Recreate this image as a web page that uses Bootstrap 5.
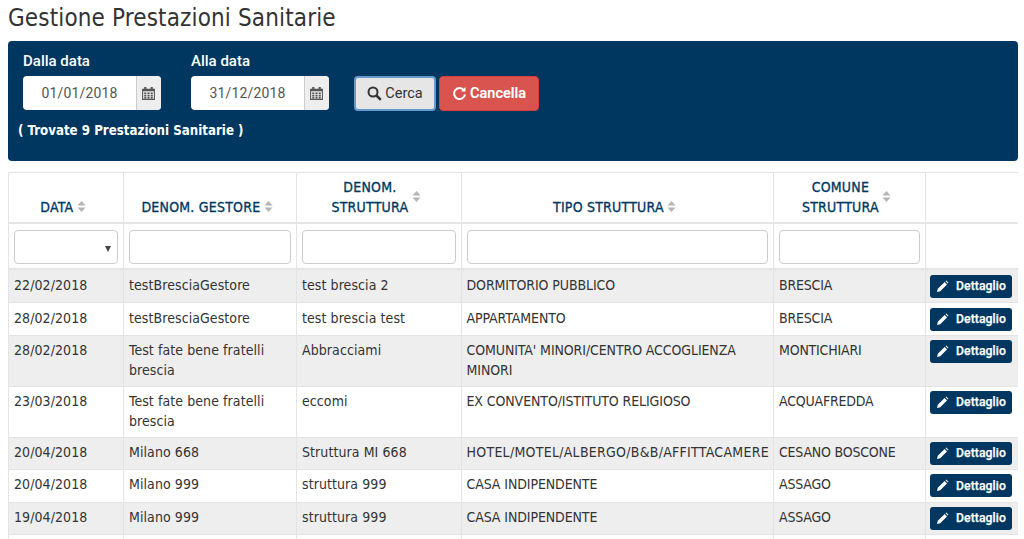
<!DOCTYPE html>
<html lang="it"><head><meta charset="utf-8"><title>Gestione Prestazioni Sanitarie</title>
<link href="https://cdn.jsdelivr.net/npm/bootstrap@5.3.0/dist/css/bootstrap.min.css" rel="stylesheet">
<style>
html,body{height:539px;overflow:hidden}
body{font-family:"DejaVu Sans Condensed","DejaVu Sans",sans-serif;font-stretch:condensed;font-size:14px;color:#333;background:#fff;padding:0 6px 0 8px}
.page-title{font-size:24px;font-weight:400;line-height:28px;margin:4px 0 9px;color:#333;font-family:inherit;letter-spacing:.14px}
.search-panel{background:#003760;border-radius:4px;height:120px;padding:12px 15px 0 15px;color:#fff}
.search-panel label{display:block;font-family:Roboto,sans-serif;font-stretch:normal;font-weight:500;font-size:15px;line-height:17px;margin-bottom:6px}
.field{width:138px;margin-right:30px}
.date-input{display:flex;height:34px;border-radius:4px;overflow:hidden;background:#fff;width:100%}
.date-input span:first-child{flex:1;text-align:center;font:400 14px/35px Roboto,sans-serif;letter-spacing:.15px;color:#555}
.date-addon{width:25px;background:#eee;border-left:1px solid #ccc;display:flex;align-items:center;justify-content:center;padding-right:2px}
.btn-cerca,.btn-cancella{height:35px;font:400 14.5px/1 Roboto,sans-serif;display:inline-flex;align-items:center;justify-content:center;border-radius:4px;padding:2px 0 0;gap:3px;position:relative;top:1px}
.btn-cerca svg,.btn-cancella svg{margin-top:-3px}
.btn-cerca{width:82px;background:#e6e6e6;border:2px solid #6699cc;color:#333;margin-left:-5px}
.btn-cancella{width:100px;background:#d9534f;border:1px solid #d43f3a;color:#fff;margin-left:3px;font-weight:500;-webkit-text-stroke:.2px #fff}
.found{font-weight:700;font-size:13.200px;line-height:16px;margin:13px 0 0 -5px}
.grid-wrap{margin-top:11px;width:1010px;height:367px;overflow:hidden}
.data-grid{table-layout:fixed;width:1010px;margin:0;border-color:#e4e4e4;--bs-table-striped-bg:#eee;--bs-table-striped-color:#333;--bs-table-color:#333;color:#333;font-size:14px}
.data-grid>:not(caption)>*>*{padding:5px;line-height:20px;vertical-align:top;border-color:#e4e4e4}
.data-grid thead th{color:#003760;font-size:14px;text-align:center;vertical-align:bottom;padding:4px 11px 5px 5px;border-bottom-width:2px;line-height:20px;font-weight:400;-webkit-text-stroke:.3px #003760;letter-spacing:.22px}
.data-grid thead tr.filter-row td{padding:6px 5px 4px;height:46px;border-bottom-width:2px}
.sorter{display:inline-block;vertical-align:middle;position:relative;top:-1px;margin-left:-1px}
.sort-wrap{display:inline-flex;align-items:center;justify-content:center}
.filter-box{height:34px;width:100%;border:1px solid #ccc;border-radius:4px;background:#fff;position:relative;display:block}
.filter-select::after{content:"";position:absolute;right:6px;top:15px;border-left:3px solid transparent;border-right:3px solid transparent;border-top:6px solid #444}
.btn-dett{display:inline-flex;align-items:center;background:#003760;color:#fff;border-radius:3px;height:23px;width:82px;font:500 12.200px/1 Roboto,sans-serif;padding:0 0 0 6px;gap:7px;border:0;-webkit-text-stroke:.25px #fff;text-decoration:none}
.col-a{width:115px}.col-b{width:173px}.col-c{width:165px}.col-d{width:312px}.col-e{width:152px}.col-f{width:93px}
.data-grid tbody td{padding-top:5px;padding-bottom:5px;letter-spacing:.08px}
.data-grid tbody tr.two td,.data-grid tbody tr.one td{padding-top:4.400px;padding-bottom:4.600px}
.data-grid tbody td.tipo{letter-spacing:-.1px;padding-left:4.500px}
.data-grid tbody td.tipo-wide{letter-spacing:.27px;padding-left:4.500px}
.data-grid tbody td.comune{letter-spacing:-.2px}
.data-grid tbody tr td.act{padding-left:4px;padding-right:0;padding-bottom:0}
.data-grid tbody tr.one td{height:32.500px}
.data-grid tbody tr.tall td{height:33px}
.data-grid tbody tr.two td{height:51px}
</style></head>
<body>
<h1 class="page-title">Gestione Prestazioni Sanitarie</h1>
<div class="search-panel">
  <div class="d-flex align-items-end">
    <div class="field"><label>Dalla data</label><div class="date-input"><span>01/01/2018</span><span class="date-addon"><svg width="15" height="15" viewBox="0 0 14 14"><path fill="#555" d="M1 2.500h2V1h2v1.500h4V1h2v1.500h2V13H1z"/><path fill="#eee" d="M2 5h10v7H2z"/><path fill="#555" d="M3 6h2v1.500H3zM6 6h2v1.500H6zM9 6h2v1.500H9zM3 8.200h2v1.500H3zM6 8.200h2v1.500H6zM9 8.200h2v1.500H9zM3 10.300h2v1.300H3zM6 10.300h2v1.300H6zM9 10.300h2v1.300H9z"/></svg></span></div></div>
    <div class="field"><label>Alla data</label><div class="date-input"><span>31/12/2018</span><span class="date-addon"><svg width="15" height="15" viewBox="0 0 14 14"><path fill="#555" d="M1 2.500h2V1h2v1.500h4V1h2v1.500h2V13H1z"/><path fill="#eee" d="M2 5h10v7H2z"/><path fill="#555" d="M3 6h2v1.500H3zM6 6h2v1.500H6zM9 6h2v1.500H9zM3 8.200h2v1.500H3zM6 8.200h2v1.500H6zM9 8.200h2v1.500H9zM3 10.300h2v1.300H3zM6 10.300h2v1.300H6zM9 10.300h2v1.300H9z"/></svg></span></div></div>
    <button class="btn btn-cerca"><svg width="15" height="15" viewBox="0 0 15 15" fill="none" stroke="#333" stroke-width="2"><circle cx="6" cy="6" r="4.500"/><path stroke-width="2.500" d="M9.500 9.500l4.300 4.300"/></svg>Cerca</button>
    <button class="btn btn-cancella"><svg width="15" height="15" viewBox="0 0 15 15" fill="none" stroke="#fff" stroke-width="2"><path d="M12 4.300A5.500 5.500 0 1 0 13 8.500"/><path fill="#fff" stroke="none" d="M9 5.500L13.500 1v4.500z"/></svg>Cancella</button>
  </div>
  <p class="found">( Trovate 9 Prestazioni Sanitarie )</p>
</div>
<div class="grid-wrap">
<table class="table table-bordered table-striped data-grid">
<colgroup><col class="col-a"><col class="col-b"><col class="col-c"><col class="col-d"><col class="col-e"><col class="col-f"></colgroup>
<thead>
<tr>
<th><span class="sort-wrap">DATA&nbsp;<svg class="sorter" width="9" height="13" viewBox="0 0 9 13" fill="#b5b5b5"><path d="M4.500 1L8.500 5.500H.5zM4.500 12L.5 7.500h8z"/></svg></span></th>
<th><span class="sort-wrap">DENOM. GESTORE&nbsp;<svg class="sorter" width="9" height="13" viewBox="0 0 9 13" fill="#b5b5b5"><path d="M4.500 1L8.500 5.500H.5zM4.500 12L.5 7.500h8z"/></svg></span></th>
<th><span class="sort-wrap"><span>DENOM.<br>STRUTTURA</span>&nbsp;<svg class="sorter" width="9" height="13" viewBox="0 0 9 13" fill="#b5b5b5"><path d="M4.500 1L8.500 5.500H.5zM4.500 12L.5 7.500h8z"/></svg></span></th>
<th><span class="sort-wrap">TIPO STRUTTURA&nbsp;<svg class="sorter" width="9" height="13" viewBox="0 0 9 13" fill="#b5b5b5"><path d="M4.500 1L8.500 5.500H.5zM4.500 12L.5 7.500h8z"/></svg></span></th>
<th><span class="sort-wrap"><span>COMUNE<br>STRUTTURA</span>&nbsp;<svg class="sorter" width="9" height="13" viewBox="0 0 9 13" fill="#b5b5b5"><path d="M4.500 1L8.500 5.500H.5zM4.500 12L.5 7.500h8z"/></svg></span></th>
<th></th>
</tr>
<tr class="filter-row"><td><span class="filter-box filter-select"></span></td><td><span class="filter-box"></span></td><td><span class="filter-box"></span></td><td><span class="filter-box"></span></td><td><span class="filter-box"></span></td><td></td></tr>
</thead>
<tbody>
<tr class="tall"><td>22/02/2018</td><td>testBresciaGestore</td><td>test brescia 2</td><td class="tipo">DORMITORIO PUBBLICO</td><td class="comune">BRESCIA</td><td class="act"><a class="btn-dett"><svg width="13" height="13" viewBox="0 0 13 13" fill="#fff"><path d="M1 12l.8-3.200L8.600 2l2.400 2.400L4.200 11.200zM9.500 1.200l.8-.6 2.100 2.100-.6.800z"/></svg>Dettaglio</a></td></tr>
<tr class="tall"><td>28/02/2018</td><td>testBresciaGestore</td><td>test brescia test</td><td class="tipo">APPARTAMENTO</td><td class="comune">BRESCIA</td><td class="act"><a class="btn-dett"><svg width="13" height="13" viewBox="0 0 13 13" fill="#fff"><path d="M1 12l.8-3.200L8.600 2l2.400 2.400L4.200 11.200zM9.500 1.200l.8-.6 2.100 2.100-.6.800z"/></svg>Dettaglio</a></td></tr>
<tr class="two"><td>28/02/2018</td><td>Test fate bene fratelli brescia</td><td>Abbracciami</td><td class="tipo">COMUNITA' MINORI/CENTRO ACCOGLIENZA MINORI</td><td class="comune">MONTICHIARI</td><td class="act"><a class="btn-dett"><svg width="13" height="13" viewBox="0 0 13 13" fill="#fff"><path d="M1 12l.8-3.200L8.600 2l2.400 2.400L4.200 11.200zM9.500 1.200l.8-.6 2.100 2.100-.6.800z"/></svg>Dettaglio</a></td></tr>
<tr class="two"><td>23/03/2018</td><td>Test fate bene fratelli brescia</td><td>eccomi</td><td class="tipo">EX CONVENTO/ISTITUTO RELIGIOSO</td><td class="comune">ACQUAFREDDA</td><td class="act"><a class="btn-dett"><svg width="13" height="13" viewBox="0 0 13 13" fill="#fff"><path d="M1 12l.8-3.200L8.600 2l2.400 2.400L4.200 11.200zM9.500 1.200l.8-.6 2.100 2.100-.6.800z"/></svg>Dettaglio</a></td></tr>
<tr class="one"><td>20/04/2018</td><td>Milano 668</td><td>Struttura MI 668</td><td class="tipo-wide">HOTEL/MOTEL/ALBERGO/B&amp;B/AFFITTACAMERE</td><td class="comune">CESANO BOSCONE</td><td class="act"><a class="btn-dett"><svg width="13" height="13" viewBox="0 0 13 13" fill="#fff"><path d="M1 12l.8-3.200L8.600 2l2.400 2.400L4.200 11.200zM9.500 1.200l.8-.6 2.100 2.100-.6.800z"/></svg>Dettaglio</a></td></tr>
<tr class="one"><td>20/04/2018</td><td>Milano 999</td><td>struttura 999</td><td class="tipo">CASA INDIPENDENTE</td><td class="comune">ASSAGO</td><td class="act"><a class="btn-dett"><svg width="13" height="13" viewBox="0 0 13 13" fill="#fff"><path d="M1 12l.8-3.200L8.600 2l2.400 2.400L4.200 11.200zM9.500 1.200l.8-.6 2.100 2.100-.6.800z"/></svg>Dettaglio</a></td></tr>
<tr class="one"><td>19/04/2018</td><td>Milano 999</td><td>struttura 999</td><td class="tipo">CASA INDIPENDENTE</td><td class="comune">ASSAGO</td><td class="act"><a class="btn-dett"><svg width="13" height="13" viewBox="0 0 13 13" fill="#fff"><path d="M1 12l.8-3.200L8.600 2l2.400 2.400L4.200 11.200zM9.500 1.200l.8-.6 2.100 2.100-.6.800z"/></svg>Dettaglio</a></td></tr>
<tr class="one"><td>&nbsp;</td><td></td><td></td><td></td><td></td><td></td></tr>
</tbody>
</table>
</div>
<script src="https://cdn.jsdelivr.net/npm/bootstrap@5.3.0/dist/js/bootstrap.bundle.min.js"></script>
</body></html>
